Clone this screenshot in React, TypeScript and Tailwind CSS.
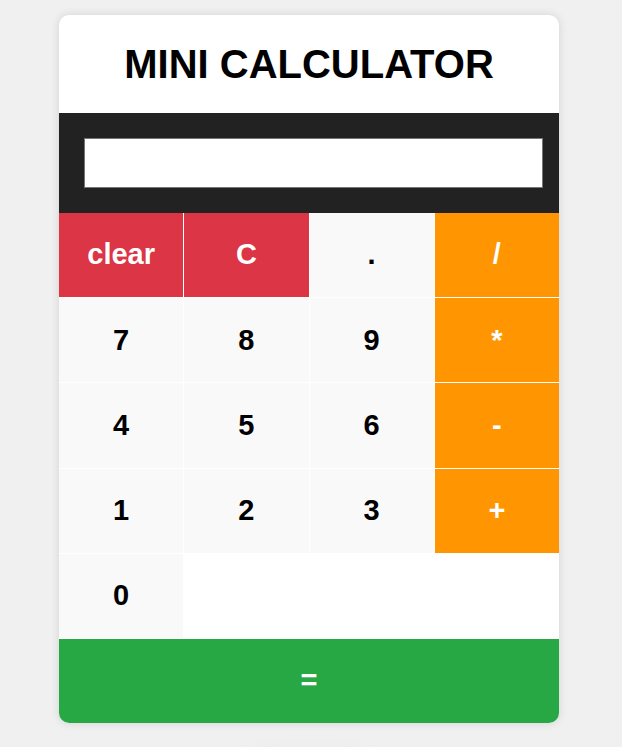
import { useState } from 'react';

const light = 'bg-[#f9f9f9] text-black';
const red = 'bg-[#dc3545] text-white';
const orange = 'bg-[#ff9500] text-white';

const keys: { label: string; cls: string }[] = [
  { label: 'clear', cls: red },
  { label: 'C', cls: red },
  { label: '.', cls: light },
  { label: '/', cls: orange },
  { label: '7', cls: light },
  { label: '8', cls: light },
  { label: '9', cls: light },
  { label: '*', cls: orange },
  { label: '4', cls: light },
  { label: '5', cls: light },
  { label: '6', cls: light },
  { label: '-', cls: orange },
  { label: '1', cls: light },
  { label: '2', cls: light },
  { label: '3', cls: light },
  { label: '+', cls: orange },
  { label: '0', cls: light },
];

export default function App() {
  const [value, setValue] = useState('');

  const press = (k: string) => {
    if (k === 'clear') return setValue('');
    if (k === 'C') return setValue(value.slice(0, -1));
    setValue(value + k);
  };

  const calc = () => {
    try {
      // eslint-disable-next-line no-new-func
      setValue(String(Function('return (' + value + ')')()));
    } catch {
      setValue('Error');
    }
  };

  return (
    <div
      className="h-[747px] bg-[#f0f0f0] pt-[15px] pl-[59px] overflow-hidden"
      style={{ fontFamily: '"Liberation Sans", Arial, sans-serif' }}
    >
      <div className="w-[500px] bg-white rounded-[10px] overflow-hidden shadow-[0_0_10px_rgba(0,0,0,0.12)]">
        <div className="h-[98px] flex items-center justify-center">
          <h1 className="text-[40px] font-bold text-black leading-none">MINI CALCULATOR</h1>
        </div>
        <div className="h-[100px] bg-[#222222] pt-[25px] pl-[25px]">
          <input
            value={value}
            onChange={(e) => setValue(e.target.value)}
            className="w-[459px] h-[50px] bg-white border border-[#767676] px-2 text-[24px] outline-none"
          />
        </div>
        <div className="grid grid-cols-4 auto-rows-[84.2px] gap-px bg-white">
          {keys.map((k) => (
            <button
              key={k.label}
              onClick={() => press(k.label)}
              className={`${k.cls} flex items-center justify-center text-[29px] font-bold`}
            >
              {k.label}
            </button>
          ))}
          <div className="col-span-3 bg-white" />
          <button
            onClick={calc}
            className="col-span-4 bg-[#28a745] text-white flex items-center justify-center text-[29px] font-bold"
          >
            =
          </button>
        </div>
      </div>
      <div className="mt-[30px] ml-[195px] w-[110px] h-[30px] rounded-full bg-[#e4e4e4] blur-[8px]" />
    </div>
  );
}
